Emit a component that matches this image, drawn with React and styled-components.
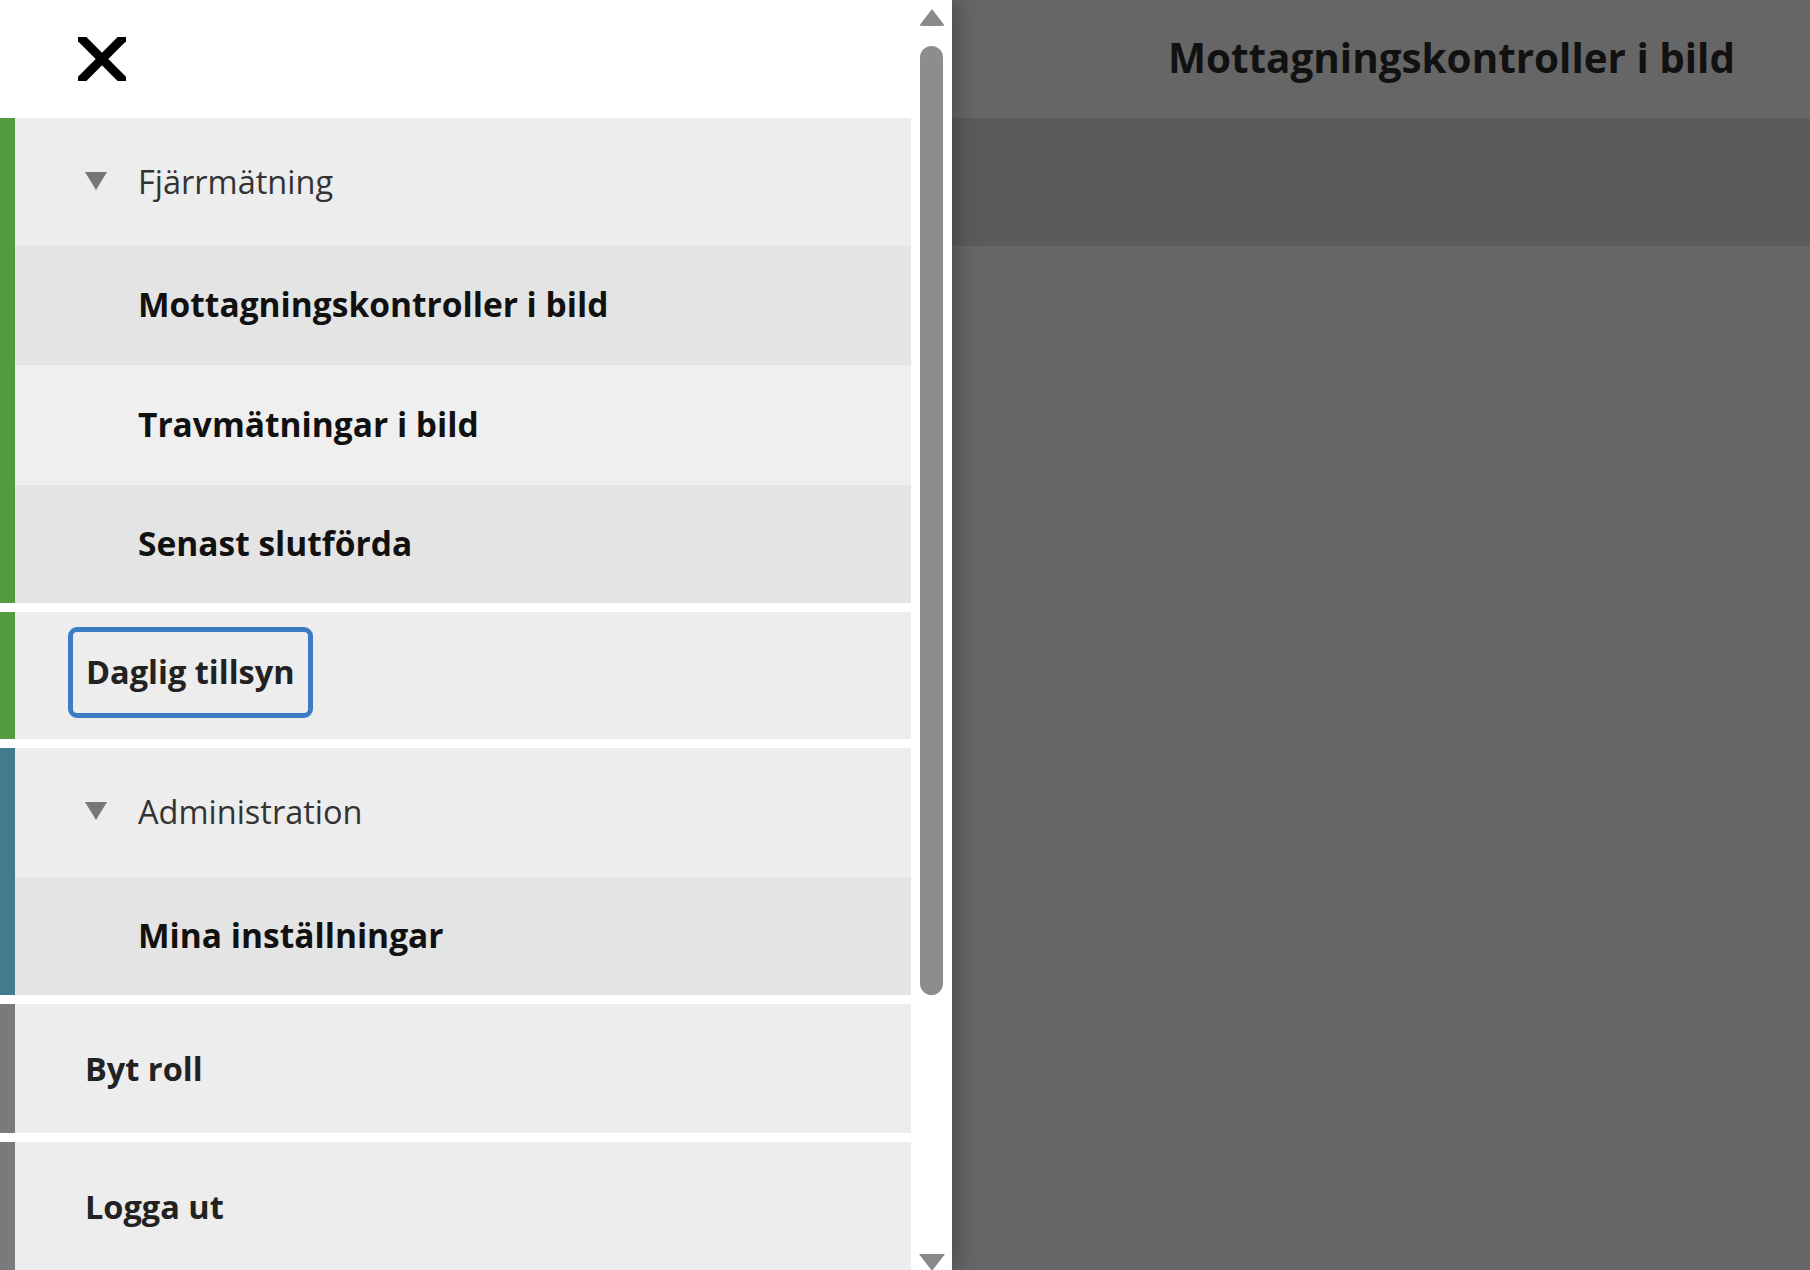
import React from "react";
import styled, { createGlobalStyle } from "styled-components";

const Global = createGlobalStyle`
  html, body { margin: 0; padding: 0; overflow: hidden; background: #fff; }
  body { font-family: "Open Sans", "Noto Sans", sans-serif; }
  * { box-sizing: border-box; }
`;

const Page = styled.div`
  display: flex;
  width: 1810px;
  height: 1270px;
  overflow: hidden;
`;

const Drawer = styled.aside`
  display: flex;
  width: 952px;
  flex: none;
  background: #fff;
  position: relative;
  z-index: 2;
  box-shadow: 6px 0 18px rgba(0, 0, 0, 0.25);
`;

const MenuColumn = styled.nav`
  width: 911px;
  display: flex;
  flex-direction: column;
  gap: 9px;
`;

const DrawerHeader = styled.div`
  height: 118px;
  flex: none;
  display: flex;
  align-items: center;
  padding-left: 78px;
  margin-bottom: -9px;
`;

const CloseButton = styled.button`
  border: 0;
  background: none;
  padding: 0;
  width: 48px;
  height: 44px;
  margin-top: -1px;
  cursor: pointer;
  display: block;
`;

const Group = styled.div`
  display: flex;
  border-left: 15px solid ${(p) => p.$accent};
  flex: none;
`;

const GroupBody = styled.div`
  flex: 1;
  display: flex;
  flex-direction: column;
`;

const SectionHead = styled.div`
  height: ${(p) => p.$h || 129}px;
  display: flex;
  align-items: center;
  background: #ededed;
  padding-left: 70px;
  padding-bottom: 2px;
  gap: 31px;
  font-size: 32.5px;
  color: #333;
  font-weight: 400;
`;

const Caret = styled.span`
  width: 0;
  height: 0;
  border-left: 11px solid transparent;
  border-right: 11px solid transparent;
  border-top: 18px solid #777;
  margin-top: -1px;
`;

const SubItem = styled.div`
  height: ${(p) => p.$h || 119}px;
  display: flex;
  align-items: center;
  padding-left: 123px;
  padding-bottom: 3px;
  background: ${(p) => (p.$alt ? "#efefef" : "#e4e4e4")};
  font-size: 33.5px;
  font-weight: 700;
  color: #111;
`;

const TopItem = styled.div`
  height: ${(p) => p.$h || 129}px;
  display: flex;
  align-items: center;
  padding-left: 53px;
  background: #ededed;
  font-size: 32.5px;
  font-weight: 700;
  color: #222;
`;

const FocusBox = styled.span`
  display: inline-flex;
  align-items: center;
  height: 91px;
  margin-top: -6px;
  padding: 0 13px 2px;
  border: 5px solid #3b7cc4;
  border-radius: 9px;
`;

const ItemText = styled.span`
  padding-left: ${(p) => p.$pl || 0}px;
`;

const ScrollColumn = styled.div`
  width: 41px;
  flex: none;
  display: flex;
  flex-direction: column;
  align-items: center;
  padding-top: 9px;
  background: #fff;
`;

const ArrowUp = styled.div`
  width: 0;
  height: 0;
  border-left: 13px solid transparent;
  border-right: 13px solid transparent;
  border-bottom: 17px solid #8a8a8a;
  border-radius: 3px;
`;

const ArrowDown = styled.div`
  width: 0;
  height: 0;
  border-left: 13px solid transparent;
  border-right: 13px solid transparent;
  border-top: 17px solid #8a8a8a;
  margin-top: auto;
  margin-bottom: -1px;
`;

const Thumb = styled.div`
  width: 23px;
  height: 949px;
  margin-top: 20px;
  background: #8d8d8d;
  border-radius: 12px;
`;

const Backdrop = styled.main`
  flex: 1;
  display: flex;
  flex-direction: column;
  background: #666;
`;

const BackHeader = styled.header`
  height: 118px;
  display: flex;
  align-items: center;
  justify-content: flex-end;
  padding-right: 75px;
  background: #666;
`;

const Title = styled.h1`
  margin: 0;
  margin-top: -4px;
  font-size: 40.4px;
  font-weight: 700;
  color: #111;
`;

const Band = styled.div`
  height: 128px;
  background: #5b5b5b;
`;

function CloseIcon() {
  return (
    <svg width="48" height="44" viewBox="0 0 48 44">
      <line x1="-1" y1="-3" x2="49" y2="47" stroke="#000" strokeWidth="9" />
      <line x1="49" y1="-3" x2="-1" y2="47" stroke="#000" strokeWidth="9" />
    </svg>
  );
}

export default function App() {
  return (
    <>
      <Global />
      <Page>
        <Drawer>
          <MenuColumn>
            <DrawerHeader>
              <CloseButton aria-label="Stäng">
                <CloseIcon />
              </CloseButton>
            </DrawerHeader>

            <Group $accent="#549a3f">
              <GroupBody>
                <SectionHead $h={128}>
                  <Caret />
                  Fjärrmätning
                </SectionHead>
                <SubItem>Mottagningskontroller i bild</SubItem>
                <SubItem $alt $h={120}>Travmätningar i bild</SubItem>
                <SubItem $h={118}>Senast slutförda</SubItem>
              </GroupBody>
            </Group>

            <Group $accent="#549a3f">
              <GroupBody>
                <TopItem $h={127}>
                  <FocusBox>Daglig tillsyn</FocusBox>
                </TopItem>
              </GroupBody>
            </Group>

            <Group $accent="#437b8e">
              <GroupBody>
                <SectionHead>
                  <Caret />
                  Administration
                </SectionHead>
                <SubItem $h={118}>Mina inställningar</SubItem>
              </GroupBody>
            </Group>

            <Group $accent="#7a7a7a">
              <GroupBody>
                <TopItem>
                  <ItemText $pl={17}>Byt roll</ItemText>
                </TopItem>
              </GroupBody>
            </Group>

            <Group $accent="#7a7a7a">
              <GroupBody>
                <TopItem>
                  <ItemText $pl={17}>Logga ut</ItemText>
                </TopItem>
              </GroupBody>
            </Group>
          </MenuColumn>
          <ScrollColumn>
            <ArrowUp />
            <Thumb />
            <ArrowDown />
          </ScrollColumn>
        </Drawer>
        <Backdrop>
          <BackHeader>
            <Title>Mottagningskontroller i bild</Title>
          </BackHeader>
          <Band />
        </Backdrop>
      </Page>
    </>
  );
}
